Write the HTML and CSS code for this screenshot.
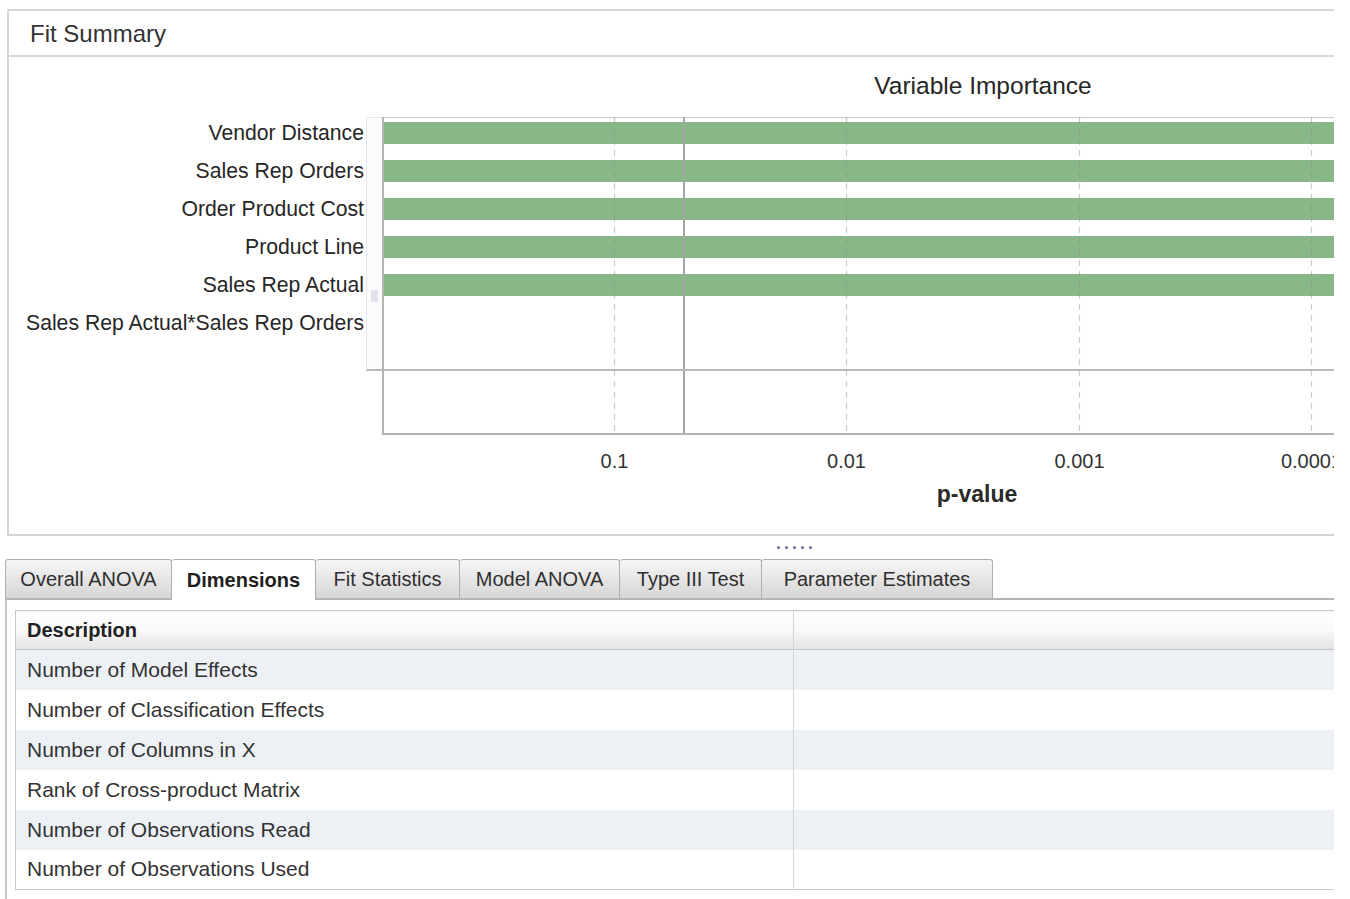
FILE: index.html
```html
<!DOCTYPE html>
<html lang="en">
<head>
<meta charset="utf-8">
<title>Fit Summary</title>
<link rel="stylesheet" href="styles.css">
</head>
<body>
<div class="viewport">
  <section class="fit-panel">
    <header class="fit-header">Fit Summary</header>
    <div class="chart">
      <div class="chart-title">Variable Importance</div>
      <div class="chart-body">
        <ul class="labels">
          <li>Vendor Distance</li>
          <li>Sales Rep Orders</li>
          <li>Order Product Cost</li>
          <li>Product Line</li>
          <li>Sales Rep Actual</li>
          <li>Sales Rep Actual*Sales Rep Orders</li>
        </ul>
        <div class="gutter"><span class="gutter-thumb"></span></div>
        <svg class="plot" width="1202" height="358" viewBox="0 0 1202 358">
          <line class="frame-top" x1="0" y1="0.5" x2="1202" y2="0.5"/>
          <!-- bars: one row every 38px -->
          <rect class="bar" x="2" y="5" width="1200" height="22"/>
          <rect class="bar" x="2" y="43" width="1200" height="22"/>
          <rect class="bar" x="2" y="81" width="1200" height="22"/>
          <rect class="bar" x="2" y="119" width="1200" height="22"/>
          <rect class="bar" x="2" y="157" width="1200" height="22"/>
          <!-- log-scale grid: one decade every 232.5px -->
          <line class="grid" x1="232.5" y1="0" x2="232.5" y2="317"/>
          <line class="grid" x1="464.5" y1="0" x2="464.5" y2="317"/>
          <line class="grid" x1="697.5" y1="0" x2="697.5" y2="317"/>
          <line class="grid" x1="929.5" y1="0" x2="929.5" y2="317"/>
          <!-- reference line at p = 0.05 -->
          <line class="ref" x1="302" y1="0" x2="302" y2="317"/>
          <line class="sep" x1="0" y1="253" x2="1202" y2="253"/>
          <line class="axis" x1="1" y1="0" x2="1" y2="318"/>
          <line class="axis" x1="0" y1="317" x2="1202" y2="317"/>
          <text class="tick" x="232.5" y="351">0.1</text>
          <text class="tick" x="464.5" y="351">0.01</text>
          <text class="tick" x="697.5" y="351">0.001</text>
          <text class="tick" x="929.5" y="351">0.0001</text>
        </svg>
      </div>
      <div class="axis-title">p-value</div>
    </div>
  </section>

  <div class="splitter"><i></i><i></i><i></i><i></i><i></i></div>

  <nav class="tabbar">
    <span class="tab">Overall ANOVA</span>
    <span class="tab tab-active">Dimensions</span>
    <span class="tab">Fit Statistics</span>
    <span class="tab">Model ANOVA</span>
    <span class="tab">Type III Test</span>
    <span class="tab">Parameter Estimates</span>
  </nav>

  <div class="tab-content">
    <table class="dim-table">
      <thead>
        <tr><th class="col-desc">Description</th><th class="col-val"></th></tr>
      </thead>
      <tbody>
        <tr><td>Number of Model Effects</td><td class="col-val"></td></tr>
        <tr><td>Number of Classification Effects</td><td class="col-val"></td></tr>
        <tr><td>Number of Columns in X</td><td class="col-val"></td></tr>
        <tr><td>Rank of Cross-product Matrix</td><td class="col-val"></td></tr>
        <tr><td>Number of Observations Read</td><td class="col-val"></td></tr>
        <tr><td>Number of Observations Used</td><td class="col-val"></td></tr>
      </tbody>
    </table>
  </div>
</div>
</body>
</html>
```
FILE: styles.css
```css
* { box-sizing: border-box; }

body {
  margin: 0;
  background: #fff;
  font-family: "Liberation Sans", Arial, sans-serif;
  color: #2b2b2b;
}

.viewport {
  width: 1334px;
  height: 899px;
  overflow: hidden;
}

/* ---------- Fit Summary panel ---------- */
.fit-panel {
  margin: 9px 0 0 7px;
  width: 1440px;
  height: 527px;
  border: 2px solid #d6d6d6;
  border-right: none;
}

.fit-header {
  height: 46px;
  padding-left: 21px;
  border-bottom: 2px solid #d9d9d9;
  font-size: 24px;
  line-height: 46px;
  color: #333;
}

.chart-title {
  margin-left: 373px;
  width: 1202px;
  height: 60px;
  line-height: 58px;
  text-align: center;
  font-size: 24.5px;
  color: #262626;
}

.chart-body {
  display: flex;
  align-items: flex-start;
}

.labels {
  flex: none;
  list-style: none;
  margin: -3px 0 0 0;
  padding: 0 2px 0 0;
  width: 357px;
  text-align: right;
  font-size: 21.2px;
  line-height: 38px;
  color: #262626;
  white-space: nowrap;
}

.gutter {
  flex: none;
  width: 16px;
  height: 254px;
  background: #fbfbfc;
  border-left: 1px solid #e6e6ea;
  border-top: 1px solid #e6e6ea;
  border-bottom: 2px solid #b9b9b9;
  display: flex;
  flex-direction: column;
  align-items: center;
}

.gutter-thumb {
  margin-top: 172px;
  width: 7px;
  height: 12px;
  background: #e6e0ee;
}

.plot { display: block; flex: none; }
.plot .frame-top { stroke: #d4d4d4; stroke-width: 1.5; }
.plot .bar { fill: #88b888; }
.plot .grid { stroke: #8c8c8c; stroke-opacity: 0.45; stroke-width: 1.2; stroke-dasharray: 6 5; }
.plot .ref { stroke: #a6a6a6; stroke-width: 2; }
.plot .sep { stroke: #b9b9b9; stroke-width: 2; }
.plot .axis { stroke: #b4b4b4; stroke-width: 2; }
.plot .tick {
  font-family: "Liberation Sans", Arial, sans-serif;
  font-size: 20px;
  fill: #333;
  text-anchor: middle;
}

.axis-title {
  margin-left: 373px;
  width: 1202px;
  padding-right: 12px;
  text-align: center;
  font-weight: bold;
  font-size: 23px;
  line-height: 38px;
  color: #2a2a2a;
}

/* ---------- splitter grip ---------- */
.splitter {
  height: 23px;
  display: flex;
  align-items: center;
  gap: 5px;
  padding-left: 777px;
}
.splitter i {
  width: 3px;
  height: 3px;
  border-radius: 50%;
  background: #5f6f92;
}

/* ---------- tabs ---------- */
.tabbar {
  display: flex;
  align-items: flex-end;
  margin-left: 5px;
  width: 1440px;
  height: 41px;
  border-bottom: 2px solid #b5b5b5;
}

.tab {
  height: 39px;
  line-height: 38px;
  text-align: center;
  font-size: 20px;
  color: #2f2f2f;
  white-space: nowrap;
  border: 1px solid #aeaeae;
  border-bottom: none;
  border-left-width: 0;
  border-radius: 3px 3px 0 0;
  background: linear-gradient(#f6f6f6, #e4e4e4 55%, #d6d6d6);
}
.tab:first-child { border-left-width: 1px; width: 167px; }
.tab:nth-child(2) { width: 144px; }
.tab:nth-child(3) { width: 144px; }
.tab:nth-child(4) { width: 160px; }
.tab:nth-child(5) { width: 142px; }
.tab:nth-child(6) { width: 231px; }

.tab-active {
  height: 41px;
  margin-bottom: -2px;
  background: #fff;
  font-weight: bold;
  color: #1f1f1f;
  line-height: 41px;
}

/* ---------- table ---------- */
.tab-content {
  margin-left: 5px;
  width: 1440px;
  height: 300px;
  border-left: 2px solid #c6c6c6;
  padding: 10px 0 0 8px;
}

.dim-table {
  width: 1420px;
  border-collapse: collapse;
  border: 1px solid #c9c9c9;
  font-size: 21px;
  color: #333;
}

.dim-table th {
  height: 39px;
  padding: 0 0 0 11px;
  text-align: left;
  font-size: 20px;
  font-weight: bold;
  color: #222;
  background: linear-gradient(#ffffff, #f8f8f8 50%, #e3e3e3);
  border-bottom: 1px solid #c6c6c6;
}

.dim-table .col-desc { width: 778px; }

.dim-table td {
  height: 40px;
  padding: 0 0 0 11px;
  white-space: nowrap;
}

.dim-table tbody tr:nth-child(odd) { background: #edf1f6; }

.dim-table .col-val { border-left: 1px solid #d2d4d8; }
```
